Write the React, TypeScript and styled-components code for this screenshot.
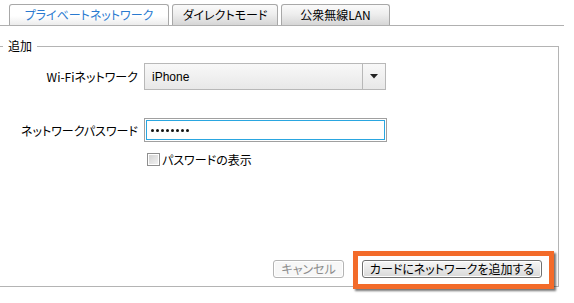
import React from "react";
import styled, { createGlobalStyle } from "styled-components";

const Global = createGlobalStyle`
  html, body { margin: 0; padding: 0; background: #fff; }
  body {
    font-family: "Noto Sans CJK JP", "Noto Sans", sans-serif;
    font-size: 12px;
    color: #000;
    font-feature-settings: "palt";
  }
`;

const Page = styled.div`
  width: 574px;
  height: 303px;
  overflow: hidden;
  position: relative;
`;

const TabStrip = styled.div`
  display: flex;
  gap: 3px;
  padding-left: 9px;
  height: 25px;
  align-items: flex-end;
  border-bottom: 1px solid #b0b0b0;
  width: 555px;
`;

const Tab = styled.div<{ $active?: boolean; $w: number }>`
  width: ${(p) => p.$w}px;
  height: 21px;
  box-sizing: border-box;
  border: 1px solid #a8a8a8;
  border-bottom: none;
  border-radius: 3px 3px 0 0;
  display: flex;
  align-items: center;
  justify-content: center;
  line-height: 1;
  color: ${(p) => (p.$active ? "#2a7ad0" : "#000")};
  background: ${(p) =>
    p.$active
      ? "linear-gradient(#ffffff 0%, #ffffff 55%, #ececec 100%)"
      : "linear-gradient(#fafafa 0%, #eeeeee 45%, #d6d6d6 100%)"};
`;

const Fieldset = styled.fieldset`
  margin: 13px 0 0 0;
  padding: 10px 0 0 0;
  width: 559px;
  height: 248px;
  box-sizing: border-box;
  border: 1px solid #b4b4b4;
  border-left: none;
  display: flex;
  flex-direction: column;
`;

const Legend = styled.legend`
  margin-left: 3px;
  padding: 0 5px;
  line-height: 14px;
`;

const FormGrid = styled.div`
  display: grid;
  grid-template-columns: 138px 242px;
  column-gap: 6px;
  align-items: center;
`;

const Label = styled.div<{ $gap?: number }>`
  text-align: right;
  white-space: nowrap;
  margin-top: ${(p) => p.$gap ?? 0}px;
`;

const Select = styled.div`
  height: 27px;
  box-sizing: border-box;
  border: 1px solid #b8b8b8;
  display: flex;
  background: linear-gradient(#f8f8f8, #e8e8e8);
`;

const SelectValue = styled.div`
  flex: 1;
  display: flex;
  align-items: center;
  padding-left: 7px;
  font-family: "Liberation Sans", "Noto Sans", sans-serif;
  font-size: 12px;
`;

const SelectArrow = styled.div`
  width: 22px;
  border-left: 1px solid #b8b8b8;
  display: flex;
  align-items: center;
  justify-content: center;
`;

const PasswordBox = styled.div`
  height: 24px;
  box-sizing: border-box;
  border: 1px solid #a0a0a0;
  padding: 1px;
  background: #fff;
  margin-top: 28px;
  width: 243px;
`;

const PasswordInner = styled.div`
  height: 100%;
  box-sizing: border-box;
  border: 1px solid #2aa6e0;
  display: flex;
  align-items: center;
  padding-left: 4px;
  gap: 2px;
`;

const Dot = styled.span`
  width: 3px;
  height: 3px;
  border-radius: 50%;
  background: #111;
`;

const CheckRow = styled.label`
  grid-column: 2;
  display: flex;
  align-items: center;
  gap: 2px;
  margin-top: 9px;
  margin-left: 3px;
`;

const CheckBox = styled.span`
  width: 13px;
  height: 13px;
  box-sizing: border-box;
  border: 1px solid #8f8f8f;
  background: linear-gradient(135deg, #d0d0d0, #f4f4f4);
  box-shadow: inset 0 0 0 1px #fff;
`;

const ButtonBar = styled.div`
  margin-top: auto;
  display: flex;
  justify-content: flex-end;
  align-items: center;
  gap: 18px;
  padding-right: 16px;
  padding-bottom: 8px;
`;

const Button = styled.button<{ $disabled?: boolean }>`
  font: inherit;
  height: 18px;
  padding: 0 7px;
  box-sizing: border-box;
  line-height: 1;
  border-radius: 3px;
  border: 1px solid ${(p) => (p.$disabled ? "#b4b4b4" : "#707070")};
  color: ${(p) => (p.$disabled ? "#8c8c8c" : "#000")};
  background: ${(p) =>
    p.$disabled
      ? "#f7f7f7"
      : "linear-gradient(#f6f6f6 0%, #e8e8e8 50%, #d8d8d8 100%)"};
  box-shadow: inset 0 0 0 1px #fff;
  display: flex;
  align-items: center;
`;

const Highlight = styled.div`
  position: relative;
  &::after {
    content: "";
    position: absolute;
    left: -9px;
    right: -12px;
    top: -9px;
    bottom: -11px;
    border: 5px solid #f36b2a;
    box-shadow: 2px 2px 2px rgba(0, 0, 0, 0.55);
    pointer-events: none;
  }
`;

export default function App() {
  return (
    <Page>
      <Global />
      <TabStrip>
        <Tab $active $w={160}>プライベートネットワーク</Tab>
        <Tab $w={106}>ダイレクトモード</Tab>
        <Tab $w={109}>公衆無線LAN</Tab>
      </TabStrip>
      <Fieldset>
        <Legend>追加</Legend>
        <FormGrid>
          <Label>Wi-Fiネットワーク</Label>
          <Select>
            <SelectValue>iPhone</SelectValue>
            <SelectArrow>
              <svg width="8" height="5" viewBox="0 0 8 5">
                <path d="M0 0h8L4 4.5z" fill="#222" />
              </svg>
            </SelectArrow>
          </Select>
          <Label $gap={28}>ネットワークパスワード</Label>
          <PasswordBox>
            <PasswordInner>
              {Array.from({ length: 8 }).map((_, i) => (
                <Dot key={i} />
              ))}
            </PasswordInner>
          </PasswordBox>
          <CheckRow>
            <CheckBox />
            <span>パスワードの表示</span>
          </CheckRow>
        </FormGrid>
        <ButtonBar>
          <Button $disabled>キャンセル</Button>
          <Highlight>
            <Button>カードにネットワークを追加する</Button>
          </Highlight>
        </ButtonBar>
      </Fieldset>
    </Page>
  );
}
